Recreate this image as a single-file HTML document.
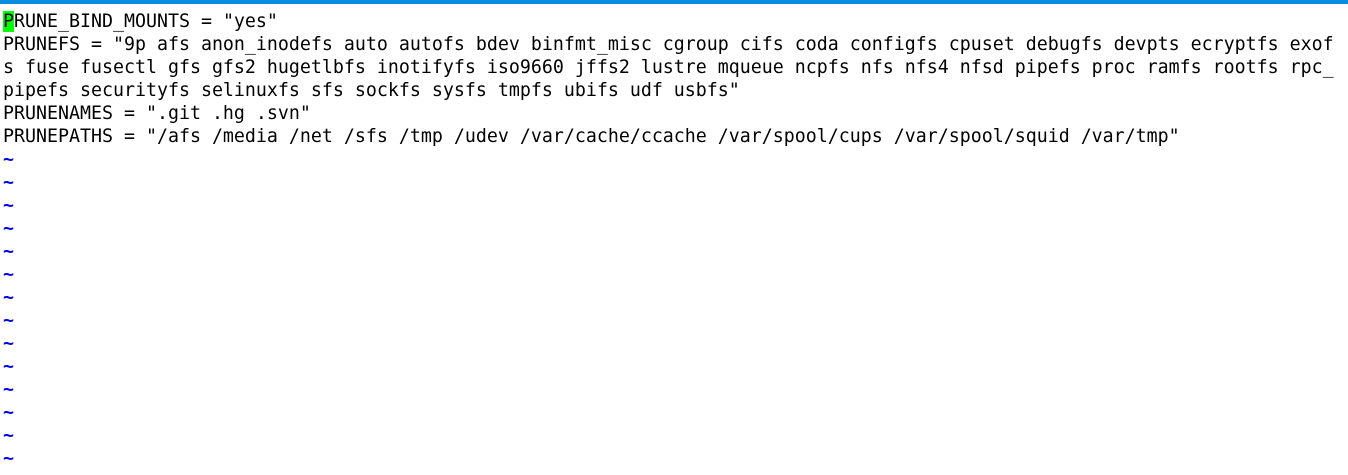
<!DOCTYPE html>
<html><head><style>
html,body{margin:0;padding:0;background:#fff;width:1348px;height:475px;overflow:hidden}
.bar{position:absolute;left:0;top:0;width:1348px;height:4px;background:#0a8de0}
pre{position:absolute;left:3px;top:10px;margin:0;font-family:"DejaVu Sans Mono","Liberation Mono",monospace;font-size:18.28px;line-height:23px;color:#000;white-space:pre}
.c{background:#00ff00}
.t{color:#0000ff;font-weight:bold}
</style></head><body>
<div class="bar"></div>
<pre><span class="c">P</span>RUNE_BIND_MOUNTS = "yes"
PRUNEFS = "9p afs anon_inodefs auto autofs bdev binfmt_misc cgroup cifs coda configfs cpuset debugfs devpts ecryptfs exof
s fuse fusectl gfs gfs2 hugetlbfs inotifyfs iso9660 jffs2 lustre mqueue ncpfs nfs nfs4 nfsd pipefs proc ramfs rootfs rpc_
pipefs securityfs selinuxfs sfs sockfs sysfs tmpfs ubifs udf usbfs"
PRUNENAMES = ".git .hg .svn"
PRUNEPATHS = "/afs /media /net /sfs /tmp /udev /var/cache/ccache /var/spool/cups /var/spool/squid /var/tmp"
<span class="t">~
~
~
~
~
~
~
~
~
~
~
~
~
~</span></pre>
</body></html>
